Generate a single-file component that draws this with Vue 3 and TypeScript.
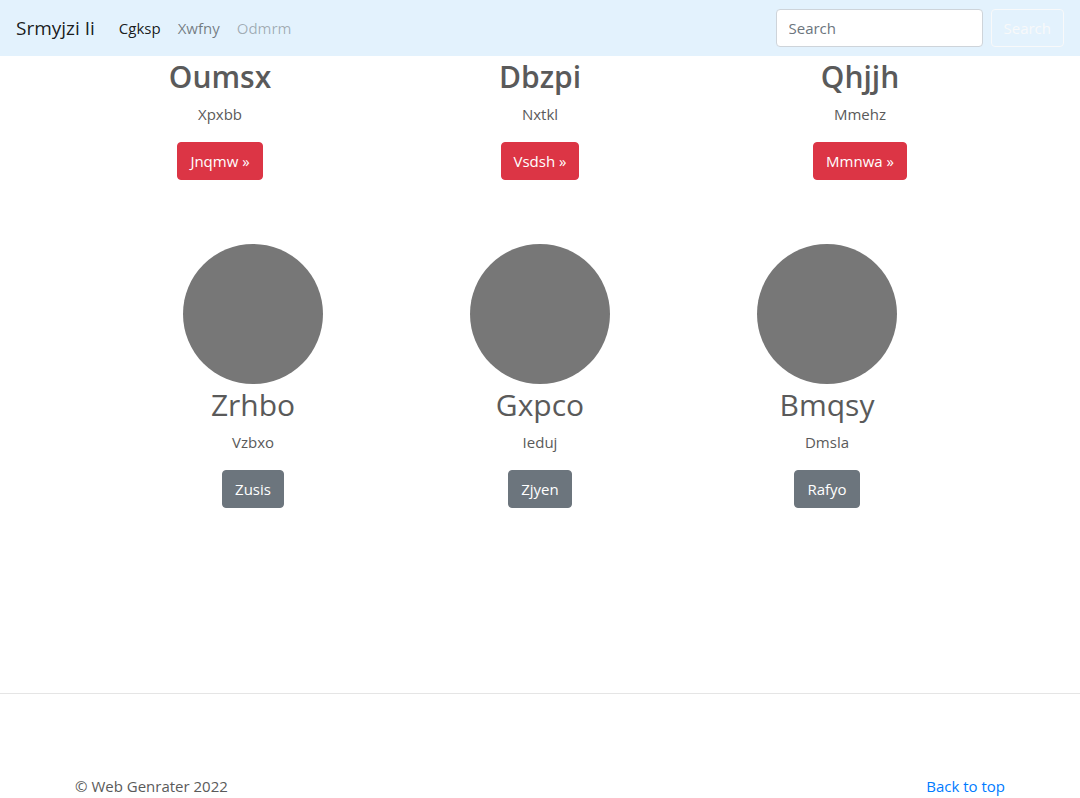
<script setup lang="ts">
import { ref } from 'vue'

interface Item {
  title: string
  text: string
  action: string
}

const query = ref('')

const features: Item[] = [
  { title: 'Oumsx', text: 'Xpxbb', action: 'Jnqmw »' },
  { title: 'Dbzpi', text: 'Nxtkl', action: 'Vsdsh »' },
  { title: 'Qhjjh', text: 'Mmehz', action: 'Mmnwa »' },
]

const people: Item[] = [
  { title: 'Zrhbo', text: 'Vzbxo', action: 'Zusis' },
  { title: 'Gxpco', text: 'Ieduj', action: 'Zjyen' },
  { title: 'Bmqsy', text: 'Dmsla', action: 'Rafyo' },
]
</script>

<template>
  <div class="page">
    <header class="navbar">
      <a class="brand" href="#">Srmyjzi Ii</a>
      <nav class="links">
        <a class="link active" href="#">Cgksp</a>
        <a class="link" href="#">Xwfny</a>
        <a class="link disabled" href="#" aria-disabled="true">Odmrm</a>
      </nav>
      <form class="search" @submit.prevent>
        <input v-model="query" class="field" type="search" placeholder="Search" aria-label="Search" />
        <button class="btn outline" type="submit">Search</button>
      </form>
    </header>

    <main>
      <section class="features">
        <article v-for="item in features" :key="item.title" class="card">
          <h2 class="title strong">{{ item.title }}</h2>
          <p class="text">{{ item.text }}</p>
          <a class="btn danger" href="#">{{ item.action }}</a>
        </article>
      </section>

      <section class="people">
        <article v-for="item in people" :key="item.title" class="card">
          <div class="avatar"></div>
          <h2 class="title">{{ item.title }}</h2>
          <p class="text">{{ item.text }}</p>
          <a class="btn secondary" href="#">{{ item.action }}</a>
        </article>
      </section>
    </main>

    <footer class="footer">
      <p>© Web Genrater 2022</p>
      <a class="top" href="#">Back to top</a>
    </footer>
  </div>
</template>

<style>
body {
  margin: 0;
  background: #fff;
}
</style>

<style scoped>
.page,
.page * {
  box-sizing: border-box;
}

.page {
  font-family: 'Segoe UI', 'Open Sans', 'Noto Sans', sans-serif;
  font-size: 15px;
  line-height: 24px;
  color: #5a5a5a;
}

.page a {
  text-decoration: none;
}

.navbar {
  display: flex;
  align-items: center;
  height: 56px;
  padding: 0 16px;
  background: #e3f2fd;
}

.brand {
  margin-right: 16px;
  font-size: 19px;
  line-height: 30px;
  color: rgba(0, 0, 0, 0.9);
}

.links {
  display: flex;
  flex: 1;
  gap: 1px;
}

.page .link {
  padding: 8px;
  color: rgba(0, 0, 0, 0.5);
}

.page .link.active {
  color: rgba(0, 0, 0, 0.9);
}

.page .link.disabled {
  color: rgba(0, 0, 0, 0.3);
}

.search {
  display: flex;
  gap: 8px;
}

.field {
  width: 207px;
  height: 38px;
  padding: 6px 12px;
  border: 1px solid #ced4da;
  border-radius: 4px;
  background: #fff;
  font: inherit;
  color: #495057;
  appearance: none;
}

.field::placeholder {
  color: #6c757d;
  opacity: 1;
}

.btn {
  display: inline-block;
  padding: 6px 12px;
  border: 1px solid transparent;
  border-radius: 4px;
  font: inherit;
  color: #fff;
}

.outline {
  border-color: #f8f9fa;
  background: transparent;
  color: #f8f9fa;
}

.danger {
  border-color: #dc3545;
  background: #dc3545;
}

.secondary {
  border-color: #6c757d;
  background: #6c757d;
}

.features {
  display: flex;
  justify-content: space-between;
  max-width: 780px;
  margin: 0 auto 64px;
}

.people {
  display: grid;
  grid-template-columns: repeat(3, 1fr);
  max-width: 861px;
  margin: 0 auto 185px;
}

.card {
  text-align: center;
}

.features .card {
  width: 140px;
}

.avatar {
  width: 140px;
  height: 140px;
  margin: 0 auto;
  border-radius: 50%;
  background: #777;
}

.title {
  margin: 0 0 4px;
  font-size: 30px;
  line-height: 42px;
  font-weight: 400;
}

.strong {
  font-weight: 600;
}

.text {
  margin: 0 0 16px;
}

.footer {
  display: flex;
  justify-content: space-between;
  padding: 80px 75px 0;
  border-top: 1px solid #e5e5e5;
}

.footer p {
  margin: 0;
}

.top {
  color: #007bff;
}
</style>
